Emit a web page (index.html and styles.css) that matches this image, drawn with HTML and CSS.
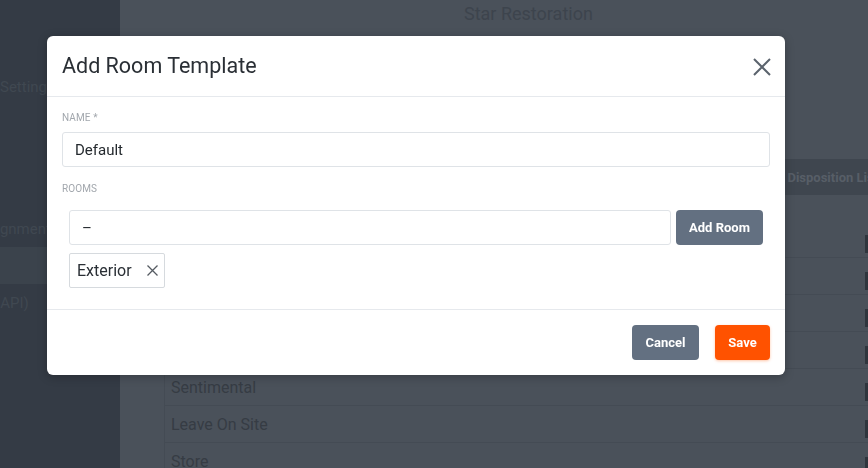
FILE: index.html
```html
<!DOCTYPE html>
<html lang="en">
<head>
<meta charset="utf-8">
<title>Add Room Template</title>
<link rel="stylesheet" href="styles.css">
</head>
<body>
<div class="app">
  <aside class="sidebar">
    <div class="side-item side-settings"><span>Settings</span></div>
    <div class="side-item side-assign"><span class="clip-assign">Assignments</span></div>
    <div class="side-item side-active"><span></span></div>
    <div class="side-item"><span class="clip-api">(API)</span></div>
  </aside>
  <main class="main">
    <header class="topbar"><span class="brand">Star Restoration</span></header>
    <section class="content">
      <div class="tabs">
        <span class="tab">Content Disposition List</span>
      </div>
      <div class="list">
        <div class="row"><span></span><i class="edge"></i></div>
        <div class="row"><span></span><i class="edge"></i></div>
        <div class="row"><span></span><i class="edge"></i></div>
        <div class="row"><span></span><i class="edge"></i></div>
        <div class="row"><span>Sentimental</span><i class="edge"></i></div>
        <div class="row"><span>Leave On Site</span><i class="edge"></i></div>
        <div class="row"><span>Store</span><i class="edge"></i></div>
      </div>
    </section>
  </main>
</div>

<div class="overlay">
  <div class="modal">
    <div class="modal-header">
      <h2 class="modal-title">Add Room Template</h2>
      <button class="close-btn" aria-label="Close">
        <svg width="18" height="18" viewBox="0 0 18 18"><path d="M1 1 L17 17 M17 1 L1 17" stroke="#5b636d" stroke-width="2" fill="none"/></svg>
      </button>
    </div>
    <div class="modal-body">
      <div class="field field-name">
        <label class="field-label">Name *</label>
        <input class="text-input" type="text" value="Default">
      </div>
      <div class="field">
        <label class="field-label">Rooms</label>
        <div class="rooms">
          <div class="rooms-row">
            <input class="text-input room-input" type="text" value="–">
            <button class="btn btn-gray btn-add">Add Room</button>
          </div>
          <div class="chips">
            <span class="chip">Exterior
              <svg class="chip-x" width="11" height="11" viewBox="0 0 11 11"><path d="M0.5 0.5 L10.5 10.5 M10.5 0.5 L0.5 10.5" stroke="#555b62" stroke-width="1.3" fill="none"/></svg>
            </span>
          </div>
        </div>
      </div>
    </div>
    <div class="modal-footer">
      <button class="btn btn-gray btn-cancel">Cancel</button>
      <button class="btn btn-save">Save</button>
    </div>
  </div>
</div>
</body>
</html>
```

FILE: styles.css
```css
* { box-sizing: border-box; }

html, body {
  margin: 0;
  padding: 0;
  height: 100%;
  overflow: hidden;
  font-family: Roboto, "Liberation Sans", Arial, sans-serif;
}

.app {
  display: grid;
  grid-template-columns: 120px 1fr;
  height: 468px;
}

/* Sidebar (dimmed) */
.sidebar {
  background: #343b45;
  padding-top: 68px;
  overflow: hidden;
  white-space: nowrap;
}
.side-item {
  height: 37px;
  display: flex;
  align-items: center;
  font-size: 15px;
  color: #404851;
}
.side-assign { margin-top: 105px; }
.side-active { background: #3b434c; }
.clip-assign { margin-left: -29px; }
.clip-api { margin-left: -5px; }

/* Main (dimmed) */
.main {
  background: #4a515a;
  overflow: hidden;
}
.topbar {
  height: 36px;
  padding: 3px 0 0 344px;
}
.brand {
  font-size: 18px;
  line-height: 21px;
  color: #3d444d;
}
.content {
  padding-left: 44px;
  padding-top: 123px;
}
.tabs {
  height: 36px;
  background: #3f464f;
  display: flex;
  align-items: center;
  padding-left: 574px;
  white-space: nowrap;
  overflow: hidden;
}
.tab {
  font-size: 13px;
  font-weight: 700;
  color: #575e67;
}
.list {
  padding-top: 26px;
}
.row {
  height: 37px;
  border-left: 1px solid #444b54;
  border-bottom: 1px solid #444b54;
  display: flex;
  justify-content: space-between;
  align-items: center;
  padding-left: 6px;
  font-size: 16px;
  color: #363c44;
}
.edge {
  align-self: flex-start;
  margin-top: 14px;
  width: 3px;
  height: 18px;
  background: #2f353d;
}

/* Modal */
.overlay {
  position: fixed;
  inset: 0;
  padding: 36px 0 0 47px;
}
.modal {
  width: 738px;
  background: #ffffff;
  border-radius: 6px;
  box-shadow: 0 2px 10px rgba(0, 0, 0, 0.25);
}
.modal-header {
  height: 61px;
  padding: 0 14px 0 15px;
  display: flex;
  align-items: center;
  justify-content: space-between;
  border-bottom: 1px solid #e6e9ed;
}
.modal-title {
  margin: 0;
  font-size: 21.5px;
  line-height: 30px;
  font-weight: 400;
  color: #2a2f35;
}
.close-btn {
  border: 0;
  background: none;
  padding: 0;
  width: 18px;
  height: 18px;
  display: flex;
  margin-top: 1px;
}

.modal-body {
  padding: 14px 15px;
}
.field-name { margin-bottom: 15px; }
.field-label {
  display: block;
  font-size: 10px;
  line-height: 14px;
  text-transform: uppercase;
  color: #a2a7ad;
  letter-spacing: 0.1px;
  margin-bottom: 7px;
}
.text-input {
  display: block;
  width: 100%;
  height: 35px;
  border: 1px solid #dfe3e7;
  border-radius: 3px;
  padding: 0 12px;
  font-family: inherit;
  font-size: 15px;
  color: #24292e;
  background: #fff;
  outline: none;
}
.rooms { padding: 7px; }
.rooms-row {
  display: flex;
  gap: 5px;
}
.room-input { flex: 1; }

.btn {
  height: 35px;
  border: 0;
  border-radius: 4px;
  font-family: inherit;
  font-size: 13px;
  font-weight: 700;
  color: #ffffff;
  padding: 0;
}
.btn-gray { background: #637081; }
.btn-add { width: 87px; flex: none; }
.btn-cancel { width: 67px; }
.btn-save {
  width: 55px;
  background: #ff5200;
  box-shadow: 0 1px 3px rgba(255, 90, 0, 0.35);
}

.chips {
  display: flex;
  margin-top: 8px;
}
.chip {
  display: flex;
  align-items: center;
  gap: 15px;
  height: 35px;
  border: 1px solid #d6dade;
  border-radius: 2px;
  padding: 0 6px 0 7px;
  font-size: 16px;
  color: #2a2f35;
}
.chip-x { flex: none; }

.modal-footer {
  border-top: 1px solid #e6e9ed;
  padding: 15px;
  display: flex;
  justify-content: flex-end;
  gap: 16px;
}
```
